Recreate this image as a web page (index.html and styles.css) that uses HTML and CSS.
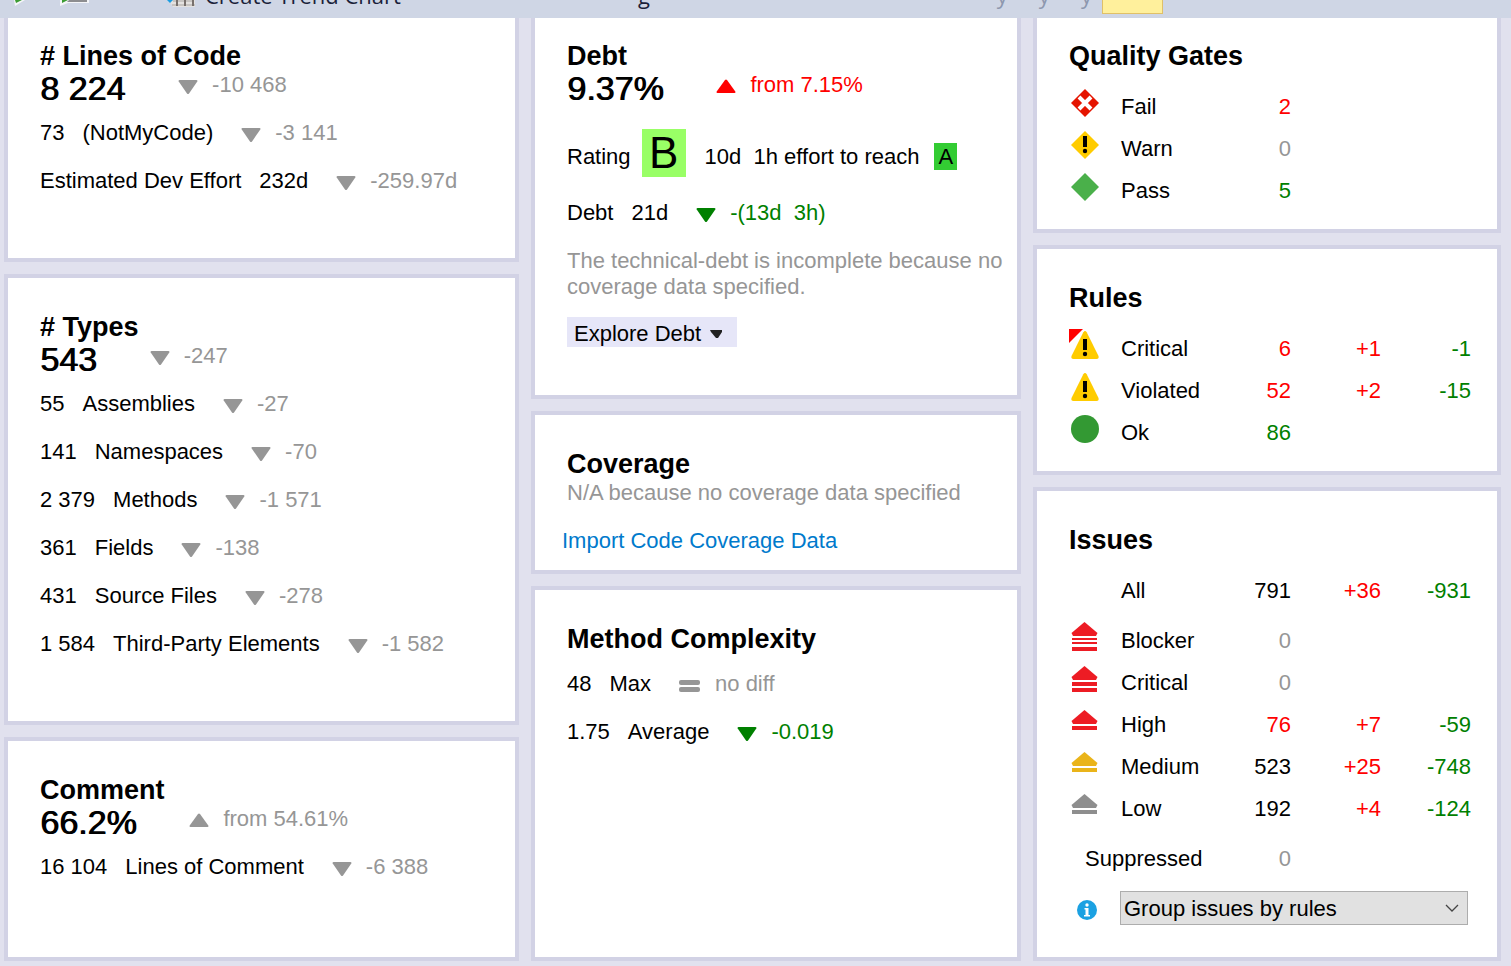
FILE: index.html
```html
<!DOCTYPE html>
<html lang="en">
<head>
<meta charset="utf-8">
<title>Dashboard</title>
<link rel="stylesheet" href="styles.css">
</head>
<body>
<svg class="defs" aria-hidden="true">
  <symbol id="down" viewBox="0 0 20 16"><path d="M1.500 1h17q1.500 0 .8 1.500L11 14.500q-1 1.200-2 0L.7 2.500Q0 1 1.500 1z" fill="currentColor"/></symbol>
  <symbol id="up" viewBox="0 0 20 16"><path d="M1.500 14h17q1.500 0 .8-1.500L11 1q-1-1.200-2 0L.7 12.500Q0 14 1.500 14z" fill="currentColor"/></symbol>
  <symbol id="equal" viewBox="0 0 22 16"><rect x="0" y="2" width="21" height="5" rx="2" fill="currentColor"/><rect x="0" y="9" width="21" height="5" rx="2" fill="currentColor"/></symbol>
  <symbol id="warning" viewBox="0 0 32 32"><path d="M14.300 3.200q1.700-2.400 3.400 0L29.500 27q.8 3-2 3h-23q-2.800 0-2-3z" fill="#fc0"/><path d="M14 10h4v11h-4z"/><circle cx="16" cy="25" r="2.200"/></symbol>
</svg>
<header class="toolbar">
  <svg class="tool-run" viewBox="0 0 16 18"><path d="M3 0h11L4 6z" fill="#f4f5f8"/><path d="M4 0h7L5 3z" fill="#3c9c34"/></svg>
  <svg class="tool-report" viewBox="0 0 32 18"><path d="M1 0h29v3H9L1 6z" fill="#f4f5f8"/><path d="M3 0h6L3 3z" fill="#3c9c34"/><path d="M10 0h18v2H8z" fill="#8d8d90"/></svg>
  <svg class="tool-chart" viewBox="0 0 32 18"><path d="M4 0h26v7H8z" fill="#e4e2e0"/><path d="M2 0h6L5 3z" fill="#1b9de2"/><path d="M8 1h21M7 5h23" stroke="#aaa6a2"/><path d="M12 0v6M20 0v6M28 0v6" stroke="#77706c" stroke-width="2"/></svg>
  <span class="tool-label">Create Trend Chart</span>
  <span class="tool-label tool-g">g</span>
  <span class="tool-label tool-days"><span>y</span><span>y</span><span>y</span></span>
  <span class="tool-selected"></span>
</header>
<main class="dashboard">
  <div class="column">
    <section class="card first">
      <h2># Lines of Code</h2>
      <div class="total"><strong>8 224</strong><span class="delta"><svg><use href="#down"/></svg>-10 468</span></div>
      <div class="metric"><span>73</span><span>(NotMyCode)</span><span class="delta"><svg><use href="#down"/></svg>-3 141</span></div>
      <div class="metric"><span>Estimated Dev Effort</span><span>232d</span><span class="delta"><svg><use href="#down"/></svg>-259.97d</span></div>
    </section>
    <section class="card">
      <h2># Types</h2>
      <div class="total"><strong>543</strong><span class="delta"><svg><use href="#down"/></svg>-247</span></div>
      <div class="metric"><span>55</span><span>Assemblies</span><span class="delta"><svg><use href="#down"/></svg>-27</span></div>
      <div class="metric"><span>141</span><span>Namespaces</span><span class="delta"><svg><use href="#down"/></svg>-70</span></div>
      <div class="metric"><span>2 379</span><span>Methods</span><span class="delta"><svg><use href="#down"/></svg>-1 571</span></div>
      <div class="metric"><span>361</span><span>Fields</span><span class="delta"><svg><use href="#down"/></svg>-138</span></div>
      <div class="metric"><span>431</span><span>Source Files</span><span class="delta"><svg><use href="#down"/></svg>-278</span></div>
      <div class="metric"><span>1 584</span><span>Third-Party Elements</span><span class="delta"><svg><use href="#down"/></svg>-1 582</span></div>
    </section>
    <section class="card">
      <h2>Comment</h2>
      <div class="total"><strong>66.2%</strong><span class="delta"><svg><use href="#up"/></svg>from 54.61%</span></div>
      <div class="metric"><span>16 104</span><span>Lines of Comment</span><span class="delta"><svg><use href="#down"/></svg>-6 388</span></div>
    </section>
  </div>
  <div class="column">
    <section class="card first debt">
      <h2>Debt</h2>
      <div class="total"><strong>9.37%</strong><span class="delta bad"><svg><use href="#up"/></svg>from 7.15%</span></div>
      <div class="rating"><span class="rating-text">Rating</span><span class="grade-b">B</span><span class="rating-text">10d&nbsp; 1h effort to reach</span><span class="grade-a">A</span></div>
      <div class="metric"><span>Debt</span><span>21d</span><span class="delta good"><svg><use href="#down"/></svg>-(13d&nbsp; 3h)</span></div>
      <p class="note">The technical-debt is incomplete because no coverage data specified.</p>
      <button class="explore" type="button">Explore Debt<svg viewBox="0 0 12 10"><path d="M0 1h12v2L8 9H6L1 3z" fill="#222"/></svg></button>
    </section>
    <section class="card coverage">
      <h2>Coverage</h2>
      <p class="note">N/A because no coverage data specified</p>
      <a class="import" href="#">Import Code Coverage Data</a>
    </section>
    <section class="card">
      <h2 class="spaced">Method Complexity</h2>
      <div class="metric"><span>48</span><span>Max</span><span class="delta"><svg class="equal"><use href="#equal"/></svg>no diff</span></div>
      <div class="metric"><span>1.75</span><span>Average</span><span class="delta good"><svg><use href="#down"/></svg>-0.019</span></div>
    </section>
  </div>
  <div class="column">
    <section class="card first list">
      <h2>Quality Gates</h2>
      <table>
        <tr><td class="icon"><svg viewBox="0 0 32 32"><path d="M16 2l14 14-14 14L2 16z" fill="#e51400"/><path d="M10 10l12 12m0-12L10 22" stroke="#fff" stroke-width="4"/></svg></td><th scope="row">Fail</th><td class="bad">2</td><td></td><td></td></tr>
        <tr><td class="icon"><svg viewBox="0 0 32 32"><path d="M16 2l14 14-14 14L2 16z" fill="#fc0"/><path d="M14 7h4v11h-4z"/><circle cx="16" cy="22" r="2.200"/></svg></td><th scope="row">Warn</th><td class="muted">0</td><td></td><td></td></tr>
        <tr><td class="icon"><svg viewBox="0 0 32 32"><path d="M16 2l14 14-14 14L2 16z" fill="#4ab04a"/></svg></td><th scope="row">Pass</th><td class="good">5</td><td></td><td></td></tr>
      </table>
    </section>
    <section class="card list">
      <h2>Rules</h2>
      <table>
        <tr><td class="icon"><svg viewBox="0 0 32 32"><use href="#warning"/><path d="M0 0h17L0 17z" fill="#fff"/><path d="M0 0h14L0 14z" fill="#f00"/></svg></td><th scope="row">Critical</th><td class="bad">6</td><td class="bad">+1</td><td class="good">-1</td></tr>
        <tr><td class="icon"><svg viewBox="0 0 32 32"><use href="#warning"/></svg></td><th scope="row">Violated</th><td class="bad">52</td><td class="bad">+2</td><td class="good">-15</td></tr>
        <tr><td class="icon"><svg viewBox="0 0 32 32"><circle cx="16" cy="16" r="14" fill="#393"/></svg></td><th scope="row">Ok</th><td class="good">86</td><td></td><td></td></tr>
      </table>
    </section>
    <section class="card list issues">
      <h2>Issues</h2>
      <table>
        <tr><td class="icon"></td><th scope="row">All</th><td>791</td><td class="bad">+36</td><td class="good">-931</td></tr>
        <tr class="apart"><td class="icon"><svg viewBox="0 0 32 32" fill="#ed1c24"><path d="M15.500 1L28.500 12l-1.500 3H4l-1.500-3z"/><path d="M3 17h25v2H3zm0 4h25v2H3zm0 5h25v4H3z"/></svg></td><th scope="row">Blocker</th><td class="muted">0</td><td></td><td></td></tr>
        <tr><td class="icon"><svg viewBox="0 0 32 32" fill="#ed1c24"><path d="M15.500 3L28.500 14l-1.500 3H4l-1.500-3z"/><path d="M3 19h25v4H3zm0 6h25v4H3z"/></svg></td><th scope="row">Critical</th><td class="muted">0</td><td></td><td></td></tr>
        <tr><td class="icon"><svg viewBox="0 0 32 32" fill="#ed1c24"><path d="M15.500 5L28.500 16l-1.500 3H4l-1.500-3z"/><path d="M3 21h25v4H3z"/></svg></td><th scope="row">High</th><td class="bad">76</td><td class="bad">+7</td><td class="good">-59</td></tr>
        <tr><td class="icon"><svg viewBox="0 0 32 32" fill="#eab41a"><path d="M15.500 5L28.500 16l-1.500 3H4l-1.500-3z"/><path d="M3 21h25v4H3z"/></svg></td><th scope="row">Medium</th><td>523</td><td class="bad">+25</td><td class="good">-748</td></tr>
        <tr><td class="icon"><svg viewBox="0 0 32 32" fill="#8e8e8e"><path d="M15.500 5L28.500 16l-1.500 3H4l-1.500-3z"/><path d="M3 21h25v4H3z"/></svg></td><th scope="row">Low</th><td>192</td><td class="bad">+4</td><td class="good">-124</td></tr>
        <tr class="apart"><th scope="row" class="suppressed" colspan="2">Suppressed</th><td class="muted">0</td><td></td><td></td></tr>
      </table>
      <div class="grouping">
        <svg class="info" viewBox="0 0 20 20"><circle cx="10" cy="10" r="10" fill="#1ba1e2"/><circle cx="10" cy="5" r="1.700" fill="#fff"/><path d="M7.500 8h4v7h1.500v1.500h-6V15h1.500V9.500h-1z" fill="#fff"/></svg>
        <div class="select-wrap">
          <select aria-label="Issue grouping"><option>Group issues by rules</option></select>
          <svg class="chevron" viewBox="0 0 14 8"><path d="M1 1l6 6 6-6" fill="none" stroke="#444" stroke-width="1.300"/></svg>
        </div>
      </div>
    </section>
  </div>
</main>
</body>
</html>
```
FILE: styles.css
```css
* { box-sizing: border-box; }
body {
  margin: 0;
  min-height: 100vh;
  display: flex;
  flex-direction: column;
  background: #e1e1ee;
  color: #000;
  font: 22px/26px "Liberation Sans", Arial, sans-serif;
}
h2, p { margin: 0; }
.defs { display: none; }

.toolbar {
  display: flex;
  align-items: flex-end;
  height: 18px;
  padding-left: 11px;
  overflow: hidden;
  background: #cfd6e5;
}
.toolbar svg { flex: none; height: 18px; }
.tool-run { width: 16px; }
.tool-report { width: 32px; margin-left: 32px; }
.tool-chart { width: 32px; margin-left: 74px; }
.tool-label {
  margin: 0 0 9px 8px;
  font: 22px/28px "Open Sans", sans-serif;
  color: #1b1f3a;
  white-space: nowrap;
}
.tool-g { margin-left: 237px; }
.tool-days { display: flex; gap: 31px; margin-left: 347px; color: #8d97ae; }
.tool-selected {
  width: 61px;
  height: 28px;
  margin: 0 0 4px 10px;
  border: 1px solid #e0c068;
  background: #fff09c;
}

.dashboard {
  flex: 1;
  display: grid;
  grid-template-columns: 515fr 490fr 468fr;
  gap: 12px;
  padding: 0 10px 5px 4px;
}
.column { display: flex; flex-direction: column; gap: 12px; min-width: 0; }
.column .card:last-child { flex: 1; }
.card {
  padding: 33px 16px 53px 32px;
  border: 4px solid #d2d2e5;
  background: #fff;
}
.first { padding-top: 22px; border-top: 0; }
h2 { font-size: 27px; line-height: 32px; font-weight: bold; }
.spaced { margin-bottom: 5px; }

.total { display: flex; align-items: flex-start; margin-bottom: 5px; }
.total strong {
  font-size: 34px;
  line-height: 32px;
  font-weight: normal;
  text-shadow: 1px 0 0 #000;
}
.metric { display: flex; align-items: center; gap: 18px; height: 48px; white-space: nowrap; }
.delta { display: flex; align-items: center; gap: 14px; color: #969696; white-space: nowrap; }
.delta svg { width: 20px; height: 16px; margin-top: 4px; }
.delta .equal { width: 22px; }
.metric .delta { margin-left: 10px; }
.total .delta { margin-left: 53px; }
.bad, .delta.bad { color: #f00; }
.good, .delta.good { color: #008000; }
.muted { color: #969696; }

.debt { padding-right: 8px; padding-bottom: 48px; }
.rating { display: flex; align-items: flex-end; margin: 25px 0 12px; white-space: nowrap; }
.rating-text { line-height: 40px; }
.grade-b {
  width: 44px;
  margin: 0 19px 0 11px;
  background: #9f6;
  font-size: 44px;
  line-height: 48px;
  text-align: center;
}
.grade-a { width: 23px; margin: 0 0 7px 15px; background: #3c3; line-height: 27px; text-align: center; }
.note { color: #969696; }
.debt .note { margin-top: 11px; }
.explore {
  display: flex;
  align-items: center;
  gap: 9px;
  width: 170px;
  height: 30px;
  margin-top: 17px;
  padding: 3px 0 0 7px;
  border: 0;
  background: #e6e6f8;
  color: #000;
  font: inherit;
}
.explore svg { width: 12px; height: 10px; }
.coverage { padding-bottom: 16px; }
.import { display: block; margin: 22px 0 0 -5px; color: #007acc; text-decoration: none; }

.list { padding-right: 26px; padding-bottom: 17px; }
table { width: 100%; margin-top: 14px; border-collapse: collapse; table-layout: fixed; }
td, th { height: 42px; padding: 0; font-weight: normal; text-align: right; }
th { text-align: left; width: 100%; }
td { width: 90px; }
.icon { width: 52px; padding-bottom: 8px; text-align: left; }
.icon svg { display: block; width: 32px; height: 32px; }
.apart td, .apart th { height: 50px; padding-top: 8px; }
.suppressed { padding-left: 16px; }
.grouping { display: flex; align-items: center; margin-top: 11px; }
.info { width: 20px; height: 20px; margin: 4px 23px 0 8px; flex: none; }
.select-wrap { position: relative; flex: 1; margin-right: 3px; }
select {
  display: block;
  width: 100%;
  height: 34px;
  padding: 2px 3px 0;
  border: 1px solid #adadad;
  border-radius: 0;
  background: #e1e1e1;
  color: #000;
  font: inherit;
  appearance: none;
}
.chevron { position: absolute; right: 9px; top: 13px; width: 14px; height: 8px; pointer-events: none; }
```
